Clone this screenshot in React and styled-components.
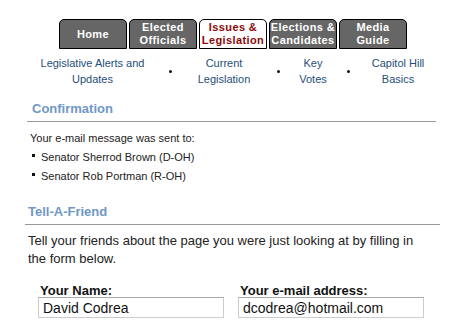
import React from 'react';
import styled, { createGlobalStyle } from 'styled-components';

const GlobalStyle = createGlobalStyle`
  body {
    margin: 0;
    background: #fff;
    font-family: "Liberation Sans", Arial, sans-serif;
    color: #222;
  }
`

const Page = styled.div`
  width: 415px;
  padding: 19px 0 0 25px;
`

const Tabs = styled.nav`
  display: flex;
  justify-content: center;
  gap: 2px;
  padding-left: 1px;
`

const Tab = styled.a`
  box-sizing: border-box;
  width: 68px;
  height: 30px;
  display: flex;
  align-items: center;
  justify-content: center;
  text-align: center;
  white-space: nowrap;
  border: 1px solid #000;
  border-radius: 5px 5px 0 0;
  background: ${p => (p.$active ? '#fff' : '#666')};
  color: ${p => (p.$active ? '#8a0a0a' : '#fff')};
  font-family: "Liberation Sans", Arial, sans-serif;
  font-weight: bold;
  font-size: 11px;
  line-height: 13px;
  letter-spacing: 0.4px;
  text-decoration: none;
`

const SubNav = styled.div`
  display: grid;
  grid-template-columns: 115px 40px 68px 40px 30px 40px 60px;
  align-items: center;
  margin: 6px 0 0 10px;
`

const SubLink = styled.a`
  text-align: center;
  color: #1f4e79;
  font-size: 11px;
  line-height: 16px;
  text-decoration: none;
`

const Dot = styled.span`
  justify-self: center;
  width: 3px;
  height: 3px;
  border-radius: 50%;
  background: #111;
`

const Heading = styled.h2`
  margin: ${p => p.$top}px ${p => p.$right}px 0 ${p => p.$left}px;
  padding: 0 0 4px ${p => p.$indent}px;
  border-bottom: 1px solid #999;
  color: #6f98c6;
  font-size: 13px;
  line-height: 16px;
  font-weight: bold;
`

const Small = styled.p`
  margin: 8px 0 0 5px;
  font-size: 11px;
  line-height: 16px;
`

const List = styled.ul`
  list-style: none;
  margin: 2px 0 0 7px;
  padding: 0;
`

const Item = styled.li`
  display: flex;
  align-items: center;
  gap: 6px;
  height: 19px;
  font-size: 11px;
  line-height: 19px;

  &::before {
    content: '';
    width: 3px;
    height: 3px;
    margin-top: -4px;
    background: #111;
  }
`

const Intro = styled.p`
  margin: 7px 0 0 3px;
  width: 398px;
  font-size: 13px;
  line-height: 18px;
  color: #222;
`

const Fields = styled.div`
  display: grid;
  grid-template-columns: 186px 186px;
  column-gap: 14px;
  margin: 16px 0 0 13px;
`

const Field = styled.label`
  display: flex;
  flex-direction: column;
`

const Label = styled.span`
  padding-left: 2px;
  font-size: 13px;
  font-weight: bold;
  line-height: 13px;
  color: #111;
`

const Input = styled.input`
  box-sizing: border-box;
  width: 186px;
  height: 21px;
  margin: 0;
  padding: 0 4px;
  border: 1px solid #ccc;
  border-top-color: #aaa;
  font-family: "Liberation Sans", Arial, sans-serif;
  font-size: 14px;
  color: #111;
`

const tabs = [
  ['Home'],
  ['Elected', 'Officials'],
  ['Issues &', 'Legislation'],
  ['Elections &', 'Candidates'],
  ['Media', 'Guide'],
]

const links = [
  ['Legislative Alerts and', 'Updates'],
  ['Current', 'Legislation'],
  ['Key', 'Votes'],
  ['Capitol Hill', 'Basics'],
]

export default function App() {
  return (
    <>
      <GlobalStyle />
      <Page>
        <Tabs>
          {tabs.map((t, i) => (
            <Tab key={i} $active={i === 2}>
              <span>{t.map((line, j) => <React.Fragment key={j}>{j > 0 && <br />}{line}</React.Fragment>)}</span>
            </Tab>
          ))}
        </Tabs>
        <SubNav>
          {links.map((l, i) => (
            <React.Fragment key={i}>
              {i > 0 && <Dot />}
              <SubLink>{l[0]}<br />{l[1]}</SubLink>
            </React.Fragment>
          ))}
        </SubNav>
        <Heading $top={14} $left={2} $right={4} $indent={5}>Confirmation</Heading>
        <Small>Your e-mail message was sent to:</Small>
        <List>
          <Item>Senator Sherrod Brown (D-OH)</Item>
          <Item>Senator Rob Portman (R-OH)</Item>
        </List>
        <Heading $top={18} $left={0} $right={0} $indent={3}>Tell-A-Friend</Heading>
        <Intro>Tell your friends about the page you were just looking at by filling in the form below.</Intro>
        <Fields>
          <Field>
            <Label>Your Name:</Label>
            <Input defaultValue="David Codrea" />
          </Field>
          <Field>
            <Label>Your e-mail address:</Label>
            <Input defaultValue="dcodrea@hotmail.com" />
          </Field>
        </Fields>
      </Page>
    </>
  );
}
